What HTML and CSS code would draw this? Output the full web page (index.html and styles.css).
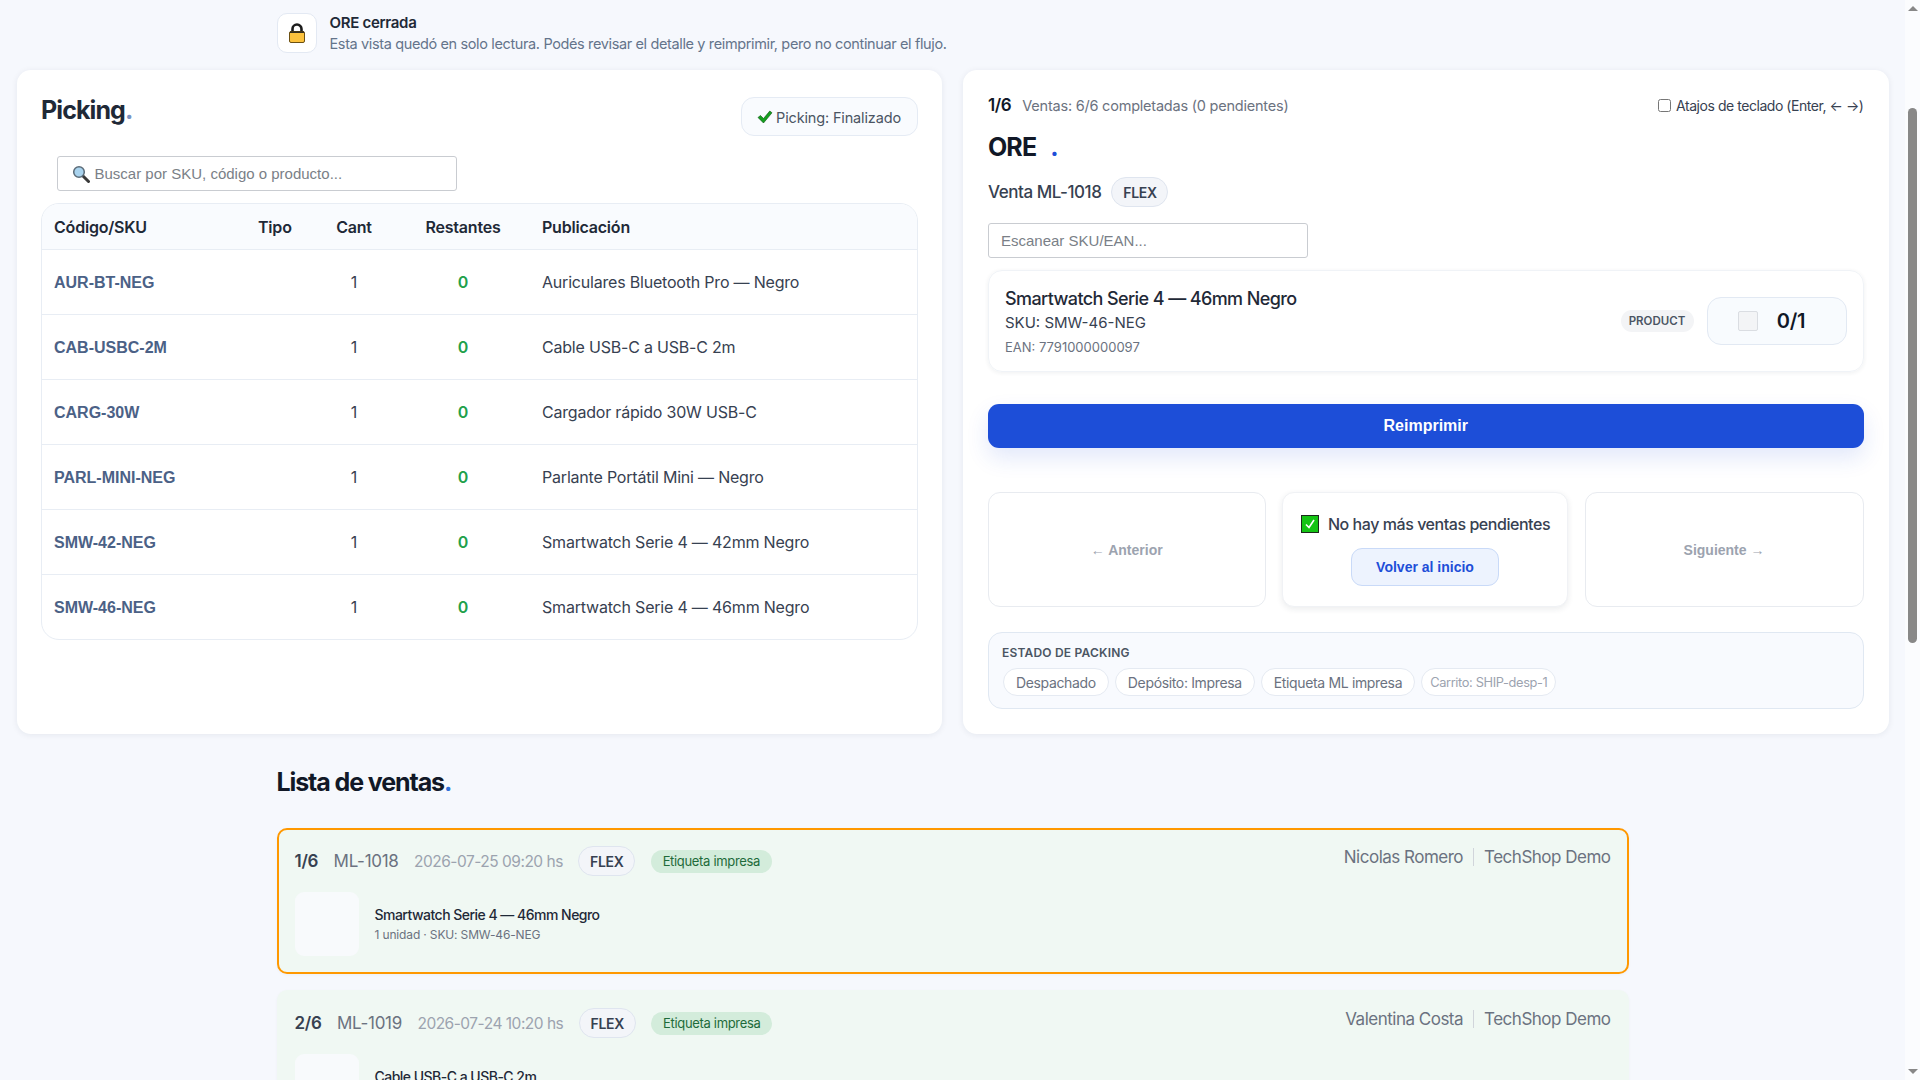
FILE: index.html
```html
<!DOCTYPE html>
<html lang="es">
<head>
  <meta charset="UTF-8" />
  <title>Picking - ORE cerrada</title>
  <link rel="stylesheet" href="styles.css">
</head>
<body>
  <div class="page">
    <!-- Aviso de solo lectura -->
    <div class="notice">
      <div class="notice-icon">
        <svg width="16" height="20" viewBox="0 0 16 20">
          <path d="M3.500 9V6a4.500 4.500 0 0 1 9 0v3" fill="none" stroke="#1c1c1c" stroke-width="2.600"/>
          <rect x=".5" y="8.500" width="15" height="11" rx="1.500" fill="#fcc23d" stroke="#6b5012" stroke-width="1"/>
          <path d="M1 9.200h14" stroke="#1c1c1c" stroke-width="1.400"/>
        </svg>
      </div>
      <div>
        <div class="notice-title">ORE cerrada</div>
        <div class="notice-text">Esta vista quedó en solo lectura. Podés revisar el detalle y reimprimir, pero no continuar el flujo.</div>
      </div>
    </div>

    <div class="panels">
      <!-- Panel de picking -->
      <section class="panel panel-picking">
        <div class="picking-head">
          <h2 class="title">Picking<span class="dot">.</span></h2>
          <div class="status-pill">
            <svg width="16" height="14" viewBox="0 0 16 14"><path d="M1 7.500l2.500-2 3 3L12.800 1 15 2.800 6.500 13z" fill="#14a01e" stroke="#0b4f10" stroke-width=".6"/></svg>
            Picking: Finalizado
          </div>
        </div>
        <div class="search">
          <svg width="18" height="18" viewBox="0 0 18 18">
            <path d="M11 11l5.500 5.500" stroke="#3a3a3a" stroke-width="3" stroke-linecap="round"/>
            <circle cx="7" cy="7" r="5.300" fill="#a9d3ee" stroke="#5b6b78" stroke-width="1.500"/>
          </svg>
          <span>Buscar por SKU, código o producto...</span>
        </div>
        <div class="table-box">
          <table class="picking-table">
            <thead>
              <tr>
                <th class="col-sku">Código/SKU</th>
                <th class="col-type">Tipo</th>
                <th class="col-qty">Cant</th>
                <th class="col-left">Restantes</th>
                <th>Publicación</th>
              </tr>
            </thead>
            <tbody>
              <tr><td class="sku">AUR-BT-NEG</td><td></td><td class="qty">1</td><td class="left">0</td><td>Auriculares Bluetooth Pro — Negro</td></tr>
              <tr><td class="sku">CAB-USBC-2M</td><td></td><td class="qty">1</td><td class="left">0</td><td>Cable USB-C a USB-C 2m</td></tr>
              <tr><td class="sku">CARG-30W</td><td></td><td class="qty">1</td><td class="left">0</td><td>Cargador rápido 30W USB-C</td></tr>
              <tr><td class="sku">PARL-MINI-NEG</td><td></td><td class="qty">1</td><td class="left">0</td><td>Parlante Portátil Mini — Negro</td></tr>
              <tr><td class="sku">SMW-42-NEG</td><td></td><td class="qty">1</td><td class="left">0</td><td>Smartwatch Serie 4 — 42mm Negro</td></tr>
              <tr><td class="sku">SMW-46-NEG</td><td></td><td class="qty">1</td><td class="left">0</td><td>Smartwatch Serie 4 — 46mm Negro</td></tr>
            </tbody>
          </table>
        </div>
      </section>

      <!-- Panel de la venta actual -->
      <section class="panel">
        <div class="sale-top">
          <div><span class="sale-count">1/6</span><span class="sale-progress">Ventas: 6/6 completadas (0 pendientes)</span></div>
          <label class="shortcuts"><input type="checkbox" /> Atajos de teclado (Enter, ← →)</label>
        </div>
        <h2 class="title ore">ORE <span class="dot">.</span></h2>
        <div class="sale-id">
          <span>Venta ML-1018</span>
          <span class="flex-pill">FLEX</span>
        </div>
        <div class="scan">Escanear SKU/EAN...</div>
        <div class="item">
          <div class="item-info">
            <div class="item-name">Smartwatch Serie 4 — 46mm Negro</div>
            <div class="item-sku">SKU: SMW-46-NEG</div>
            <div class="item-ean">EAN: 7791000000097</div>
          </div>
          <span class="product-pill">PRODUCT</span>
          <div class="counter"><span class="counter-box"></span><strong>0/1</strong></div>
        </div>
        <button class="print-btn">Reimprimir</button>
        <div class="sale-nav">
          <div class="nav-card nav-link">← Anterior</div>
          <div class="nav-card nav-middle">
            <div class="no-more">
              <svg width="18" height="18" viewBox="0 0 18 18">
                <rect x=".5" y=".5" width="17" height="17" fill="#14c414" stroke="#1c2a1c"/>
                <path d="M5 9.500l3 3 5-7.500" fill="none" stroke="#fff" stroke-width="1.600"/>
              </svg>
              No hay más ventas pendientes
            </div>
            <button class="home-btn">Volver al inicio</button>
          </div>
          <div class="nav-card nav-link">Siguiente →</div>
        </div>
        <div class="packing">
          <div class="packing-title">ESTADO DE PACKING</div>
          <div class="chips">
            <span class="chip">Despachado</span>
            <span class="chip">Depósito: Impresa</span>
            <span class="chip">Etiqueta ML impresa</span>
            <span class="chip chip-small">Carrito: SHIP-desp-1</span>
          </div>
        </div>
      </section>
    </div>

    <!-- Lista de ventas -->
    <div class="sales">
      <h2 class="title sales-title">Lista de ventas<span class="dot">.</span></h2>

      <div class="sale-card current">
        <div class="sale-head">
          <div class="sale-meta">
            <span class="meta-count">1/6</span>
            <span class="meta-id">ML-1018</span>
            <span class="meta-date">2026-07-25 09:20 hs</span>
            <span class="flex-pill">FLEX</span>
            <span class="label-pill">Etiqueta impresa</span>
          </div>
          <div class="sale-buyer"><span>Nicolas Romero</span><i class="sep"></i><span>TechShop Demo</span></div>
        </div>
        <div class="sale-item">
          <div class="thumb"></div>
          <div>
            <div class="sale-item-name">Smartwatch Serie 4 — 46mm Negro</div>
            <div class="sale-item-sub">1 unidad · SKU: SMW-46-NEG</div>
          </div>
        </div>
      </div>

      <div class="sale-card">
        <div class="sale-head">
          <div class="sale-meta">
            <span class="meta-count">2/6</span>
            <span class="meta-id">ML-1019</span>
            <span class="meta-date">2026-07-24 10:20 hs</span>
            <span class="flex-pill">FLEX</span>
            <span class="label-pill">Etiqueta impresa</span>
          </div>
          <div class="sale-buyer"><span>Valentina Costa</span><i class="sep"></i><span>TechShop Demo</span></div>
        </div>
        <div class="sale-item">
          <div class="thumb"></div>
          <div>
            <div class="sale-item-name">Cable USB-C a USB-C 2m</div>
            <div class="sale-item-sub">1 unidad · SKU: CAB-USBC-2M</div>
          </div>
        </div>
      </div>
    </div>
  </div>

  <div class="scrollbar">
    <span class="arrow-up"></span>
    <span class="thumb-bar"></span>
    <span class="arrow-down"></span>
  </div>
</body>
</html>
```

FILE: styles.css
```css
html, body {
  height: 100%;
  overflow: hidden;
}
body {
  margin: 0;
  display: flex;
  font-family: 'Inter', sans-serif;
  background: #f6f8fd;
  color: #111827;
}
.page {
  flex: 1;
  min-width: 0;
  height: 1080px;
  overflow: hidden;
}
.title {
  margin: 0;
  font-size: 25px;
  line-height: 26px;
  font-weight: 700;
  letter-spacing: -0.9px;
  color: #1f2937;
}
.dot {
  color: #7a93c2;
}

/* Aviso */
.notice {
  width: 1352px;
  margin: 0 auto;
  padding-top: 13px;
  display: flex;
  gap: 13px;
  height: 70px;
  box-sizing: border-box;
}
.notice-icon {
  width: 40px;
  height: 40px;
  box-sizing: border-box;
  background: #ffffff;
  border: 1px solid #e3e9f3;
  border-radius: 10px;
  display: flex;
  align-items: center;
  justify-content: center;
}
.notice-title {
  font-size: 15px;
  line-height: 20px;
  font-weight: 600;
  letter-spacing: -0.3px;
  color: #1f2937;
}
.notice-text {
  margin-top: 1px;
  font-size: 14.500px;
  line-height: 20px;
  letter-spacing: -0.37px;
  color: #64748b;
}

/* Paneles */
.panels {
  display: grid;
  grid-template-columns: 1fr 1fr;
  gap: 21px;
  padding: 0 16.500px;
}
.panel {
  background: #ffffff;
  border-radius: 14px;
  padding: 25px;
  height: 664px;
  box-sizing: border-box;
  box-shadow: 0 1px 6px rgba(30, 41, 59, 0.08);
}
.panel-picking {
  padding: 25px 24.500px;
}
.picking-head {
  display: flex;
  justify-content: space-between;
  align-items: flex-start;
  padding-top: 2px;
}
.status-pill {
  height: 39px;
  width: 177px;
  box-sizing: border-box;
  display: flex;
  align-items: center;
  justify-content: center;
  gap: 3px;
  padding-top: 1px;
  background: #f9fbfe;
  border: 1px solid #e5ebf4;
  border-radius: 13px;
  font-size: 14.500px;
  letter-spacing: -0.15px;
  color: #4b5563;
}
.search {
  margin: 20px 0 12px 15.500px;
  width: 400px;
  height: 35px;
  box-sizing: border-box;
  display: flex;
  align-items: center;
  gap: 5px;
  padding-left: 14px;
  background: #ffffff;
  border: 1px solid #c9ccd1;
  border-radius: 3px;
  font-family: 'Liberation Sans', sans-serif;
  font-size: 15px;
  color: #7a7f87;
}
.table-box {
  border: 1px solid #e8edf4;
  border-radius: 18px;
  overflow: hidden;
}
.picking-table {
  width: 100%;
  border-collapse: collapse;
  table-layout: fixed;
  font-size: 16px;
  letter-spacing: -0.2px;
}
.picking-table th {
  height: 45px;
  padding: 0 12px;
  background: #f9fbfe;
  font-weight: 600;
  text-align: left;
  color: #1f2937;
}
.picking-table td {
  height: 64px;
  padding: 0 12px;
  border-top: 1px solid #e8edf4;
  color: #374151;
}
.col-sku {
  width: 180px;
}
.col-type {
  width: 42px;
}
.col-qty {
  width: 60px;
}
.col-left {
  width: 110px;
}
.picking-table .col-qty, .picking-table .col-left, .qty, .left {
  text-align: center;
}
.picking-table .sku {
  height: 62px;
  padding-top: 2px;
  font-family: 'Liberation Sans', sans-serif;
  font-weight: 700;
  letter-spacing: 0;
  color: #4b6186;
}
.picking-table .left {
  color: #22a04a;
  font-weight: 600;
}

/* Venta actual */
.sale-top {
  display: flex;
  justify-content: space-between;
  align-items: center;
  height: 20px;
}
.sale-count {
  font-size: 17px;
  font-weight: 600;
  letter-spacing: -0.4px;
  margin-right: 11px;
}
.sale-progress {
  font-size: 14.500px;
  letter-spacing: -0.22px;
  color: #6b7280;
}
.shortcuts {
  display: flex;
  align-items: center;
  gap: 5px;
  font-size: 14px;
  letter-spacing: -0.45px;
  color: #374151;
}
.shortcuts input {
  margin: 0;
  width: 13px;
  height: 13px;
}
.ore {
  margin-top: 16px;
  line-height: 32px;
  color: #111827;
}
.ore .dot {
  color: #1d4ed8;
  margin-left: 9px;
}
.sale-id {
  margin-top: 14px;
  display: flex;
  align-items: center;
  gap: 10px;
  font-size: 17px;
  font-weight: 500;
  letter-spacing: -0.45px;
  color: #374151;
}
.flex-pill {
  height: 30px;
  width: 57px;
  box-sizing: border-box;
  display: inline-flex;
  align-items: center;
  justify-content: center;
  background: #f3f5f9;
  border: 1px solid #dfe5ef;
  border-radius: 15px;
  font-size: 14px;
  font-weight: 600;
  letter-spacing: -0.3px;
  color: #374151;
}
.scan {
  margin-top: 16px;
  width: 320px;
  height: 35px;
  box-sizing: border-box;
  display: flex;
  align-items: center;
  padding-left: 12px;
  background: #ffffff;
  border: 1px solid #c9ccd1;
  border-radius: 3px;
  font-family: 'Liberation Sans', sans-serif;
  font-size: 15px;
  color: #7a7f87;
}
.item {
  margin-top: 12px;
  height: 102px;
  box-sizing: border-box;
  display: flex;
  align-items: center;
  padding: 0 16px;
  border: 1px solid #f0f3f7;
  border-radius: 14px;
  box-shadow: 0 1px 4px rgba(30, 41, 59, 0.07);
}
.item-info {
  flex: 1;
  padding-top: 5px;
}
.item-name {
  font-size: 18px;
  line-height: 24px;
  font-weight: 500;
  letter-spacing: -0.6px;
  color: #1f2937;
}
.item-sku {
  font-size: 15px;
  line-height: 24px;
  letter-spacing: 0;
  color: #374151;
}
.item-ean {
  font-size: 13px;
  line-height: 25px;
  letter-spacing: 0;
  color: #6b7280;
}
.product-pill {
  width: 73px;
  height: 22px;
  display: flex;
  align-items: center;
  justify-content: center;
  margin-right: 13px;
  background: #f3f4f6;
  border-radius: 11px;
  font-size: 11.500px;
  font-weight: 600;
  color: #4b5563;
}
.counter {
  width: 140px;
  height: 48px;
  box-sizing: border-box;
  display: flex;
  align-items: center;
  justify-content: center;
  gap: 19px;
  padding-right: 10px;
  background: #f8fbfe;
  border: 1px solid #e2e9f3;
  border-radius: 14px;
  font-size: 20px;
}
.counter strong {
  font-weight: 600;
  letter-spacing: -0.3px;
}
.counter-box {
  width: 20px;
  height: 20px;
  box-sizing: border-box;
  background: #f3f4f6;
  border: 1px solid #dadde2;
  border-radius: 2px;
}
.print-btn {
  display: block;
  width: 100%;
  height: 44px;
  margin-top: 32px;
  background: #1d4ed8;
  color: #ffffff;
  border: none;
  border-radius: 11px;
  font-family: 'Liberation Sans', sans-serif;
  font-size: 16px;
  font-weight: 700;
  box-shadow: 0 10px 22px rgba(29, 78, 216, 0.13);
}
.sale-nav {
  margin-top: 44px;
  height: 115px;
  display: grid;
  grid-template-columns: 277.500px 1fr 279px;
  gap: 16.500px;
}
.nav-card {
  box-sizing: border-box;
  border: 1px solid #e8ebf0;
  border-radius: 12px;
  background: #ffffff;
}
.nav-link {
  display: flex;
  align-items: center;
  justify-content: center;
  font-family: 'Liberation Sans', sans-serif;
  font-size: 14px;
  font-weight: 700;
  color: #9ca3af;
}
.nav-middle {
  border-color: #f0f2f5;
  box-shadow: 0 2px 6px rgba(30, 41, 59, 0.09);
  display: flex;
  flex-direction: column;
  align-items: center;
  padding-top: 22px;
}
.no-more {
  display: flex;
  align-items: center;
  gap: 9px;
  height: 18px;
  padding-left: 1px;
  font-size: 16px;
  font-weight: 500;
  letter-spacing: -0.45px;
  color: #374151;
}
.home-btn {
  margin-top: 15px;
  width: 148px;
  height: 38px;
  background: #edf3fe;
  border: 1px solid #c9daf8;
  border-radius: 11px;
  font-family: 'Liberation Sans', sans-serif;
  font-size: 14px;
  font-weight: 700;
  color: #1d4ed8;
}
.packing {
  margin-top: 25px;
  height: 77px;
  box-sizing: border-box;
  padding: 12px 13px 0;
  background: #f8fafe;
  border: 1px solid #e0e8f2;
  border-radius: 14px;
}
.packing-title {
  font-size: 12px;
  line-height: 15px;
  font-weight: 600;
  letter-spacing: 0.2px;
  color: #4b5563;
}
.chips {
  margin-top: 8px;
  display: flex;
  gap: 6px;
  padding-left: 1px;
}
.chip {
  height: 28px;
  box-sizing: border-box;
  display: flex;
  align-items: center;
  padding: 0 12px;
  background: #ffffff;
  border: 1px solid #e5eaf2;
  border-radius: 14px;
  font-size: 14px;
  letter-spacing: -0.35px;
  color: #6b7280;
}
.chip-small {
  padding: 0 8px;
  font-size: 12.800px;
  color: #9ca3af;
}

/* Lista de ventas */
.sales {
  width: 1352px;
  margin: 0 auto;
}
.sales-title {
  margin-top: 32px;
  line-height: 32px;
  letter-spacing: -1.1px;
  color: #111827;
}
.sales-title .dot {
  color: #2f6fd8;
}
.sale-card {
  margin-top: 16px;
  height: 146px;
  box-sizing: border-box;
  padding: 16px 16px 16px;
  background: #f0f8f3;
  border: 2px solid transparent;
  border-radius: 10px;
  box-shadow: 0 1px 3px rgba(30, 41, 59, 0.04);
}
.sale-card.current {
  margin-top: 30px;
  border-color: #ff9800;
}
.sale-head {
  display: flex;
  justify-content: space-between;
  align-items: flex-start;
}
.sale-meta {
  display: flex;
  align-items: center;
  gap: 15.500px;
}
.meta-count {
  font-size: 17px;
  font-weight: 600;
  letter-spacing: -0.3px;
  color: #374151;
}
.meta-id {
  font-size: 17px;
  letter-spacing: -0.3px;
  color: #6b7280;
}
.meta-date {
  font-size: 15.500px;
  letter-spacing: -0.5px;
  color: #9ca3af;
}
.label-pill {
  height: 23px;
  width: 121px;
  display: flex;
  align-items: center;
  justify-content: center;
  background: #d3ecdb;
  border-radius: 12px;
  font-size: 13px;
  letter-spacing: -0.33px;
  color: #1e6b3a;
}
.sale-buyer {
  display: flex;
  align-items: center;
  height: 22px;
  font-size: 17px;
  letter-spacing: -0.5px;
  color: #6b7280;
}
.sep {
  width: 1px;
  height: 18px;
  margin: 0 10px;
  background: #d1d5db;
}
.sale-item {
  margin-top: 16px;
  display: flex;
  align-items: center;
  gap: 16px;
}
.thumb {
  width: 64px;
  height: 64px;
  background: #f8fafc;
  border-radius: 9px;
}
.sale-item-name {
  font-size: 14px;
  line-height: 20px;
  font-weight: 500;
  letter-spacing: -0.52px;
  color: #1f2937;
}
.sale-item-sub {
  font-size: 12px;
  line-height: 19px;
  letter-spacing: -0.15px;
  color: #6b7280;
}

/* Barra de desplazamiento */
.scrollbar {
  flex: none;
  width: 15px;
  height: 1080px;
  background: #fbfcfe;
  display: flex;
  flex-direction: column;
  align-items: center;
}
.arrow-up {
  margin-top: 6px;
  border-left: 5px solid transparent;
  border-right: 5px solid transparent;
  border-bottom: 5px solid #888888;
}
.thumb-bar {
  width: 9px;
  height: 535px;
  margin-top: 97px;
  background: #888888;
  border-radius: 5px;
}
.arrow-down {
  margin-top: auto;
  margin-bottom: 6px;
  border-left: 5px solid transparent;
  border-right: 5px solid transparent;
  border-top: 5px solid #888888;
}
```
